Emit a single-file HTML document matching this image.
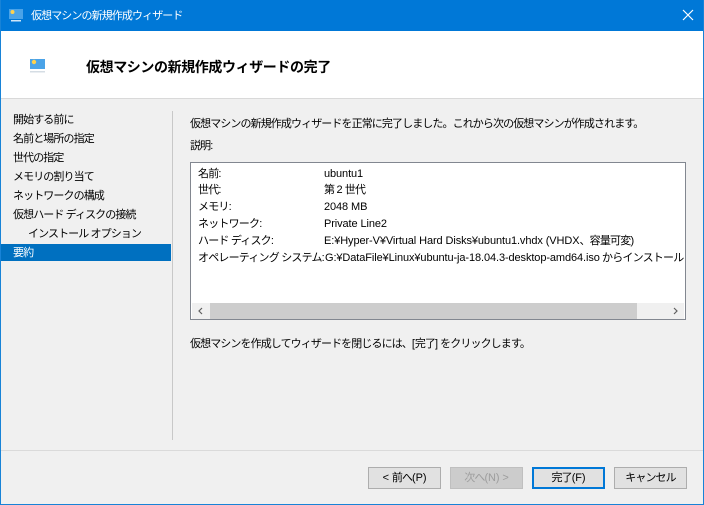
<!DOCTYPE html>
<html><head><meta charset="utf-8"><style>
*{margin:0;padding:0;box-sizing:border-box}
body{width:704px;height:505px;overflow:hidden;background:#f0f0f0;font-family:"Liberation Sans","Noto Sans CJK JP",sans-serif;font-size:11px;letter-spacing:-0.9px;color:#000;position:relative}
.l{letter-spacing:-0.1px}
.win{position:absolute;left:0;top:0;width:704px;height:505px;border:1px solid #1883d7;border-top:none}
.tb{position:absolute;left:0;top:0;width:704px;height:31px;background:#0078d7;color:#fff}
.tb .t{position:absolute;left:31px;top:9px;line-height:14px}
.x{position:absolute;left:682px;top:9px;width:12px;height:12px}
.hd{position:absolute;left:1px;top:31px;width:702px;height:68px;background:#fff;border-bottom:1px solid #d9d9d9}
.hd .t{position:absolute;left:85px;top:27px;font-size:14px;font-weight:bold;letter-spacing:-0.4px;line-height:18px}
.nav div{position:absolute;left:13px;white-space:nowrap;line-height:14px}
.sel{position:absolute;left:1px;top:244px;width:170px;height:17px;background:#0070c0}
.vs{position:absolute;left:172px;top:111px;width:1px;height:329px;background:#c8c8c8}
.hs{position:absolute;left:1px;top:450px;width:702px;height:1px;background:#dadada}
.p{position:absolute;white-space:nowrap;line-height:14px}
.box{position:absolute;left:190px;top:162px;width:496px;height:158px;background:#fff;border:1px solid #828790;overflow:hidden}
.box .r{position:absolute;white-space:nowrap;line-height:14px;letter-spacing:-0.8px}
.sb{position:absolute;left:1px;top:140px;width:492px;height:16px;background:#f0f0f0}
.th{position:absolute;left:18px;top:0;width:427px;height:16px;background:#cdcdcd}
.btn{position:absolute;top:467px;width:73px;height:22px;background:#e1e1e1;border:1px solid #adadad;text-align:center;line-height:20px}
</style></head><body>
<div class="tb">
<svg style="position:absolute;left:8px;top:7px" width="16" height="16" viewBox="0 0 16 16"><rect x="1" y="2" width="14" height="10" fill="#4aa3e8"/><circle cx="4.5" cy="5" r="2" fill="#ffd24d"/><rect x="3" y="13" width="10" height="1.5" fill="#cfe6f8"/></svg>
<div class="t">仮想マシンの新規作成ウィザード</div>
<svg class="x" viewBox="0 0 12 12"><path d="M1 1L11 11M11 1L1 11" stroke="#fff" stroke-width="1.2"/></svg>
</div>
<div class="hd">
<svg style="position:absolute;left:28px;top:26px" width="18" height="18" viewBox="0 0 18 18"><rect x="1" y="2" width="15" height="10" fill="#4aa3e8"/><circle cx="5" cy="5" r="2.2" fill="#ffd24d"/><rect x="1" y="14" width="15" height="1.5" fill="#d5dde4"/></svg>
<div class="t">仮想マシンの新規作成ウィザードの完了</div>
</div>
<div class="sel"></div>
<div class="nav">
<div style="top:113px">開始する前に</div>
<div style="top:132px">名前と場所の指定</div>
<div style="top:151px">世代の指定</div>
<div style="top:170px">メモリの割り当て</div>
<div style="top:189px">ネットワークの構成</div>
<div style="top:208px">仮想ハード ディスクの接続</div>
<div style="top:227px;left:28px">インストール オプション</div>
<div style="top:246px;color:#fff">要約</div>
</div>
<div class="vs"></div>
<div class="p" style="left:190px;top:117px">仮想マシンの新規作成ウィザードを正常に完了しました。これから次の仮想マシンが作成されます。</div>
<div class="p" style="left:190px;top:139px">説明:</div>
<div class="box">
<div class="r" style="left:7px;top:4px">名前:</div><div class="r" style="left:133px;top:4px"><span class="l">ubuntu1</span></div>
<div class="r" style="left:7px;top:20px">世代:</div><div class="r" style="left:133px;top:20px">第 <span class="l">2</span> 世代</div>
<div class="r" style="left:7px;top:37px">メモリ:</div><div class="r" style="left:133px;top:37px"><span class="l">2048 MB</span></div>
<div class="r" style="left:7px;top:54px">ネットワーク:</div><div class="r" style="left:133px;top:54px"><span class="l">Private Line2</span></div>
<div class="r" style="left:7px;top:71px">ハード ディスク:</div><div class="r" style="left:133px;top:71px"><span class="l">E:¥Hyper-V¥Virtual Hard Disks¥ubuntu1.vhdx (VHDX</span>、容量可変)</div>
<div class="r" style="left:7px;top:88px">オペレーティング システム:</div><div class="r" style="left:133px;top:88px;background:#fff;padding-left:1px"><span class="l">G:¥DataFile¥Linux¥ubuntu-ja-18.04.3-desktop-amd64.iso</span> からインストールされます</div>
<div class="sb"><div class="th"></div>
<svg style="position:absolute;left:5px;top:4px" width="8" height="8" viewBox="0 0 8 8"><path d="M5 1L2 4L5 7" stroke="#606060" fill="none" stroke-width="1.2"/></svg>
<svg style="position:absolute;left:479px;top:4px" width="8" height="8" viewBox="0 0 8 8"><path d="M3 1L6 4L3 7" stroke="#606060" fill="none" stroke-width="1.2"/></svg>
</div>
</div>
<div class="p" style="left:190px;top:337px">仮想マシンを作成してウィザードを閉じるには、<span class="l">[</span>完了<span class="l">]</span> をクリックします。</div>
<div class="hs"></div>
<div class="btn" style="left:368px"><span class="l">&lt; </span>前へ<span class="l">(P)</span></div>
<div class="btn" style="left:450px;background:#cccccc;border-color:#bfbfbf;color:#9d9d9d">次へ<span class="l">(N) &gt;</span></div>
<div class="btn" style="left:532px;border:2px solid #0078d7;line-height:18px">完了<span class="l">(F)</span></div>
<div class="btn" style="left:614px">キャンセル</div>
<div class="win"></div>
</body></html>
